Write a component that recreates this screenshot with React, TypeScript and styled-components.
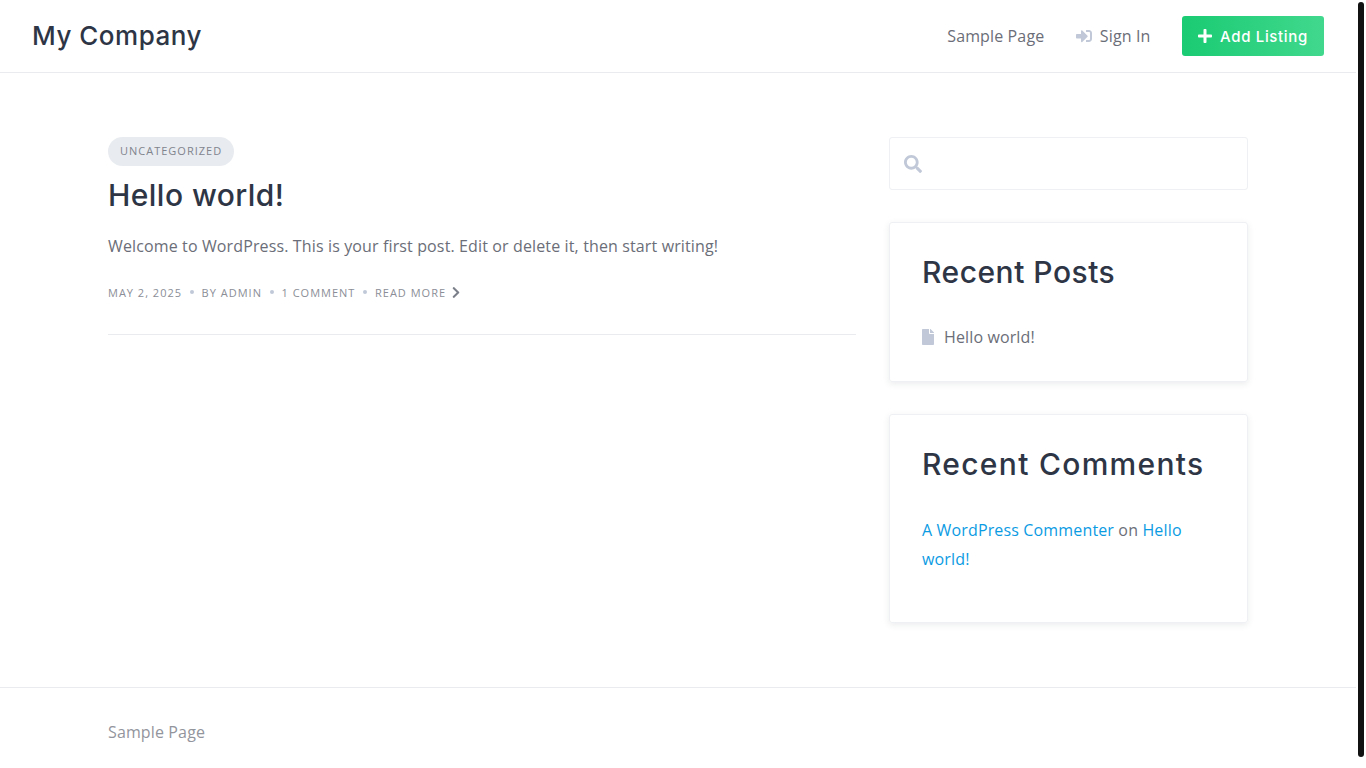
import styled, { createGlobalStyle } from "styled-components";
import { FaChevronRight, FaFile, FaPlus, FaSearch, FaSignInAlt } from "react-icons/fa";

const GlobalStyle = createGlobalStyle`
  body {
    margin: 0;
    padding-right: 10px;
    background: #fff;
    font-family: "Open Sans", "Noto Sans", sans-serif;
    font-size: 16px;
    letter-spacing: 0.13px;
    color: #6b6e78;
  }
  a {
    text-decoration: none;
    color: inherit;
  }
`;

const ScrollThumb = styled.div`
  position: fixed;
  top: 2px;
  right: 2px;
  width: 6px;
  height: 755px;
  border-radius: 3px;
  background: #111;
`;

const Header = styled.header`
  height: 72px;
  padding: 0 32px;
  display: flex;
  justify-content: space-between;
  align-items: center;
  border-bottom: 1px solid #e9ebef;
`;

const Logo = styled.a`
  padding-bottom: 2px;
  font-family: Inter, sans-serif;
  font-size: 26px;
  font-weight: 500;
  letter-spacing: 0.5px;
  color: #2e3646;
`;

const Nav = styled.nav`
  display: flex;
  align-items: center;
`;

const NavLink = styled.a`
  display: flex;
  align-items: center;
  gap: 8px;
  margin-right: 31.5px;
  svg {
    color: #c1c9d8;
  }
`;

const AddButton = styled.a`
  width: 142px;
  height: 40px;
  border-radius: 3px;
  display: flex;
  align-items: center;
  justify-content: center;
  gap: 8px;
  background: linear-gradient(90deg, #1acb73, #41d88d);
  color: #fff;
  font-family: Inter, sans-serif;
  font-size: 15px;
  font-weight: 500;
  letter-spacing: 0.65px;
  svg {
    width: 14px;
    height: 16px;
  }
`;

const Main = styled.main`
  padding: 64px 108px;
  display: flex;
  gap: 33px;
  align-items: flex-start;
`;

const Content = styled.div`
  width: 748px;
`;

const Post = styled.article`
  padding-bottom: 29px;
  border-bottom: 1px solid #e9ebef;
`;

const Category = styled.a`
  display: inline-block;
  height: 29px;
  line-height: 28px;
  padding: 0 12px;
  border-radius: 15px;
  background: #e8ebf0;
  color: #81848d;
  font-size: 11px;
  letter-spacing: 1px;
`;

const PostTitle = styled.h2`
  margin: 9px 0 0;
  font-family: Inter, sans-serif;
  font-size: 30px;
  line-height: 40px;
  font-weight: 500;
  letter-spacing: 0.45px;
  color: #2e3646;
`;

const Excerpt = styled.p`
  margin: 17px 0 0;
  line-height: 29px;
`;

const Meta = styled.div`
  margin-top: 18px;
  height: 26px;
  display: flex;
  align-items: center;
  font-size: 11px;
  letter-spacing: 1px;
  color: #8b8e97;
  svg {
    width: 8px;
    height: 13px;
    margin-left: 6px;
    color: #7b7f89;
  }
`;

const Dot = styled.span`
  width: 4px;
  height: 4px;
  margin: 0 7.8px;
  border-radius: 50%;
  background: #c1c9d8;
`;

const Sidebar = styled.aside`
  width: 359px;
  display: flex;
  flex-direction: column;
  gap: 32px;
`;

const SearchBox = styled.div`
  height: 51px;
  padding-left: 14px;
  display: flex;
  align-items: center;
  border: 1px solid #eef0f3;
  border-radius: 3px;
  color: #c1c9d8;
`;

const Widget = styled.section`
  padding: 32px 32px 29px;
  border: 1px solid #eef0f3;
  border-radius: 3px;
  box-shadow: 0 2px 6px rgba(60, 70, 90, 0.1);
`;

const WidgetTitle = styled.h3<{ $spacing: number }>`
  margin: 0 0 34px;
  font-family: Inter, sans-serif;
  font-size: 30px;
  line-height: 34px;
  font-weight: 500;
  letter-spacing: ${(p) => p.$spacing}px;
  white-space: nowrap;
  color: #2e3646;
`;

const RecentPost = styled.div`
  display: flex;
  align-items: center;
  gap: 10px;
  height: 29px;
  margin: -1px 0 1px;
  svg {
    width: 12px;
    height: 16px;
    color: #c1c9d8;
  }
`;

const Comment = styled.p`
  margin: 0 0 19px;
  padding-top: 1px;
  line-height: 29px;
  letter-spacing: 0.15px;
`;

const Blue = styled.a`
  color: #0b9be3;
`;

const Footer = styled.footer`
  padding: 33px 108px 44px;
  border-top: 1px solid #e9ebef;
  color: #93959d;
`;

export default function App() {
  return (
    <>
      <GlobalStyle />
      <ScrollThumb />
      <Header>
        <Logo href="#">My Company</Logo>
        <Nav>
          <NavLink href="#">Sample Page</NavLink>
          <NavLink href="#">
            <FaSignInAlt size={16} />
            Sign In
          </NavLink>
          <AddButton href="#">
            <FaPlus />
            Add Listing
          </AddButton>
        </Nav>
      </Header>
      <Main>
        <Content>
          <Post>
            <Category href="#">UNCATEGORIZED</Category>
            <PostTitle>Hello world!</PostTitle>
            <Excerpt>Welcome to WordPress. This is your first post. Edit or delete it, then start writing!</Excerpt>
            <Meta>
              <span>MAY 2, 2025</span>
              <Dot />
              <span>BY ADMIN</span>
              <Dot />
              <span>1 COMMENT</span>
              <Dot />
              <span>READ MORE</span>
              <FaChevronRight />
            </Meta>
          </Post>
        </Content>
        <Sidebar>
          <SearchBox>
            <FaSearch size={18} />
          </SearchBox>
          <Widget>
            <WidgetTitle $spacing={0.5}>Recent Posts</WidgetTitle>
            <RecentPost>
              <FaFile />
              Hello world!
            </RecentPost>
          </Widget>
          <Widget>
            <WidgetTitle $spacing={1.3}>Recent Comments</WidgetTitle>
            <Comment>
              <Blue href="#">A WordPress Commenter</Blue> on <Blue href="#">Hello world!</Blue>
            </Comment>
          </Widget>
        </Sidebar>
      </Main>
      <Footer>Sample Page</Footer>
    </>
  );
}
